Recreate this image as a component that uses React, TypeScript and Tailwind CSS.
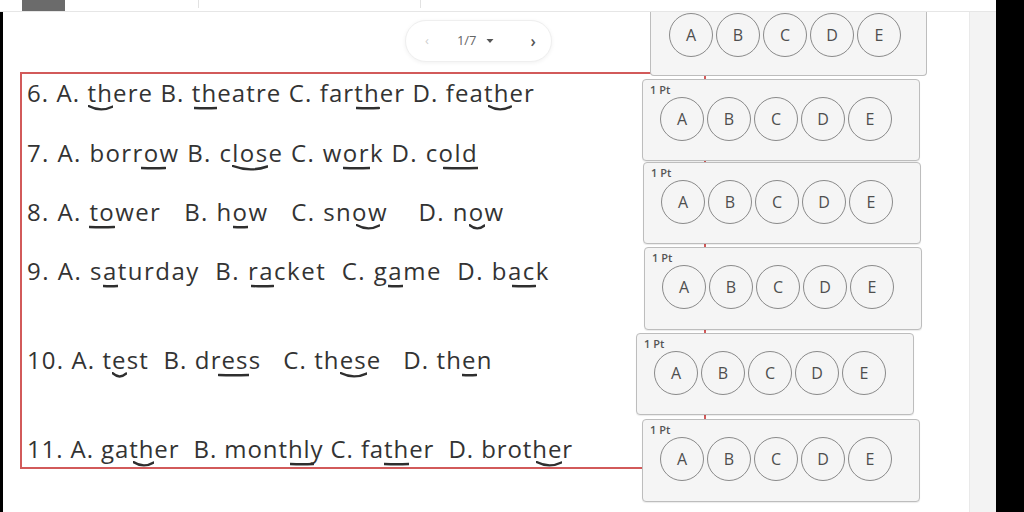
import React from "react";

type UProps = { children: React.ReactNode; c?: boolean; pos?: string };

function U({ children, c = false, pos = "left-0 right-0" }: UProps) {
  return (
    <span className="relative">
      {children}
      <span className={`absolute bottom-[-2px] h-[6px] pointer-events-none ${pos}`}>
        <svg className="block w-full h-full" viewBox="0 0 100 6" preserveAspectRatio="none">
          <path
            d={c ? "M2 1 Q50 7.5 98 1.5" : "M2 3 Q50 3.6 98 3"}
            fill="none"
            stroke="#2f2f2f"
            strokeWidth={2.4}
            strokeLinecap="round"
            vectorEffect="non-scaling-stroke"
          />
        </svg>
      </span>
    </span>
  );
}

function Circles() {
  return (
    <div className="flex gap-[3px]">
      {["A", "B", "C", "D", "E"].map((l) => (
        <div
          key={l}
          className="w-[44px] h-[44px] rounded-full border border-[#8a8a8a] flex items-center justify-center text-[16px] text-[#4f4f4f] font-medium"
        >
          {l}
        </div>
      ))}
    </div>
  );
}

function Card({ cls }: { cls: string }) {
  return (
    <div
      className={`w-[278px] bg-[#f5f5f5] border-[1.5px] border-[#bdbdbd] rounded-[4px] shadow-[0_1px_1px_rgba(0,0,0,0.08)] flex flex-col ${cls}`}
    >
      <div className="pl-[7px] pt-[3px] text-[11px] leading-[14px] font-semibold text-[#555]">1 Pt</div>
      <div className="pl-[17px] pt-[0px]">
        <Circles />
      </div>
    </div>
  );
}

export default function App() {
  return (
    <div className="w-[1024px] h-[512px] flex bg-black overflow-hidden" style={{ fontFamily: '"Open Sans", "Liberation Sans", sans-serif' }}>
      <div className="w-[996px] h-full flex flex-col bg-white">
        {/* top bar */}
        <div className="h-[12px] flex border-b border-[#e6e6e6] bg-white relative z-20 shrink-0">
          <div className="ml-[22px] w-[43px] h-[11px] bg-[#6b6b6b]" />
          <div className="ml-[133px] w-px h-[8px] bg-[#e2e2e2]" />
          <div className="ml-[221px] w-px h-[8px] bg-[#e2e2e2]" />
        </div>
        <div className="flex flex-1 min-h-0">
          <div className="w-[3px] bg-black" />
          <div className="w-[966px] relative bg-white">
            {/* pagination */}
            <div className="pl-[402px] pt-[8px]">
              <div className="w-[147px] h-[42px] rounded-full bg-white border border-[#efefef] shadow-[0_1px_4px_rgba(0,0,0,0.06)] flex items-center text-[#666]">
                <span className="ml-[19px] text-[13px] text-[#cfcfcf]">‹</span>
                <span className="ml-[28px] text-[13px] text-[#666]">1/7</span>
                <svg className="ml-[9px]" width="8" height="6" viewBox="0 0 8 6">
                  <path d="M0.5 1 L7.5 1 L4 5 Z" fill="#555" />
                </svg>
                <span className="ml-[37px] text-[16px] font-semibold text-[#555]">›</span>
              </div>
            </div>
            {/* question box */}
            <div className="ml-[17px] mt-[10px] w-[686px] border-2 border-[#d25a5a] pt-[4px] pb-[3px] pl-[5px] text-[24px] leading-[30px] tracking-[1.1px] text-[#333] whitespace-pre">
              <div className="h-[30px]">
                6. A. <U c pos="left-0 right-0">th</U>ere B. <U pos="left-[2px] right-0">th</U>eatre C. far<U pos="left-[2px] right-0">th</U>er D. fea<U c pos="left-[4px] right-[-2px]">th</U>er
              </div>
              <div className="h-[30px] mt-[30px] tracking-[1.4px]">
                7. A. borr<U pos="left-[-3px] right-[-6px]">o</U>w B. c<U c pos="left-0 right-0">los</U>e C. w<U pos="left-0 right-0">or</U>k D. c<U pos="left-[4px] right-0">old</U>
              </div>
              <div className="h-[30px] mt-[29px] tracking-[1.4px]">
                8. A. <U pos="left-0 right-0">to</U>wer   B. h<U pos="left-0 right-0">o</U>w   C. sn<U c pos="left-[4px] right-[8px]">ow</U>    D. n<U c pos="left-0 right-0">o</U>w
              </div>
              <div className="h-[30px] mt-[29px] tracking-[1.5px]">
                9. A. s<U pos="left-0 right-0">a</U>turday  B. r<U pos="left-[-8px] right-0">a</U>cket  C. g<U pos="left-0 right-0">a</U>me  D. b<U pos="left-[4px] right-0">ac</U>k
              </div>
              <div className="h-[30px] mt-[59px]">
                10. A. t<U c pos="left-0 right-0">e</U>st  B. dr<U pos="left-[-4px] right-0">es</U>s   C. th<U c pos="left-0 right-0">es</U>e   D. th<U pos="left-0 right-0">e</U>n
              </div>
              <div className="h-[30px] mt-[59px] tracking-[0.9px]">
                11. A. ga<U c pos="left-[4px] right-0">th</U>er  B. mont<U pos="left-[2px] right-[-10px]">h</U>ly C. fa<U pos="left-0 right-0">th</U>er  D. brot<U c pos="left-[4px] right-0">he</U>r
              </div>
            </div>
            {/* answer cards overlay */}
            <div className="absolute left-[631px] top-0 flex flex-col z-10">
              <div className="ml-[16px] w-[277px] h-[64px] bg-[#f5f5f5] border-[1.5px] border-t-0 border-[#bdbdbd] rounded-b-[4px] pl-[18px] pt-[1px]">
                <Circles />
              </div>
              <Card cls="ml-[8px] mt-[3px] h-[82px]" />
              <Card cls="ml-[9px] mt-[1px] h-[82px]" />
              <Card cls="ml-[10px] mt-[3px] h-[83px]" />
              <Card cls="ml-[2px] mt-[3px] h-[82px]" />
              <Card cls="ml-[8px] mt-[4px] h-[83px]" />
            </div>
          </div>
          <div className="w-[27px] bg-[#f3f3f3] border-l border-[#e9e9e9]" />
        </div>
      </div>
      <div className="w-[28px] h-full bg-black" />
    </div>
  );
}
